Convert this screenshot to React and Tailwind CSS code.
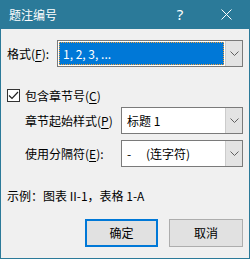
function Chevron() {
  return (
    <svg width="9" height="6" viewBox="0 0 9 6" className="block">
      <path d="M0.5 0.5 L4.5 4.5 L8.5 0.5" fill="none" stroke="#606060" strokeWidth="1" />
    </svg>
  )
}

function Combo({ children, selected }) {
  return (
    <div className="flex h-[27px] flex-1 border border-[#7a7a7a] bg-white">
      <div className="flex min-w-0 flex-1 p-[1px]">
        {selected ? (
          <div className="flex flex-1 items-center border border-dotted border-[#f4a13a] bg-[#0078d7] pl-[3px] text-white">
            {children}
          </div>
        ) : (
          <div className="flex flex-1 items-center pl-[4px] text-black">{children}</div>
        )}
      </div>
      <div className="flex w-[17px] items-center justify-center border-l border-[#cccccc] bg-[#e3e3e3]">
        <Chevron />
      </div>
    </div>
  )
}

function U({ children }) {
  return <span className="underline underline-offset-2">{children}</span>
}

export default function App() {
  return (
    <div
      className="flex h-[259px] w-[250px] flex-col bg-[#2b7a99] px-[1px] pb-[1px] text-[12px] leading-none text-black"
      style={{ fontFamily: '"Noto Sans CJK SC", "Noto Sans", sans-serif' }}
    >
      {/* title bar */}
      <div className="flex h-[29px] items-center text-white">
        <div className="flex-1 pl-[8px] text-[12px]">题注编号</div>
        <div className="flex w-[46px] justify-center text-[15px]" style={{ fontFamily: '"Noto Sans", sans-serif' }}>?</div>
        <div className="flex w-[46px] justify-center">
          <svg width="11" height="11" viewBox="0 0 11 11">
            <path d="M0.5 0.5 L10.5 10.5 M10.5 0.5 L0.5 10.5" stroke="#ffffff" strokeWidth="1" />
          </svg>
        </div>
      </div>

      {/* body */}
      <div className="flex flex-1 flex-col bg-[#f0f0f0] px-[6px]">
        <div className="mt-[11px] flex items-center">
          <span className="w-[50px]">
            格式(<U>F</U>):
          </span>
          <Combo selected>1, 2, 3, ...</Combo>
        </div>

        <div className="mt-[22px] flex items-center gap-[5px]">
          <div className="flex h-[13px] w-[13px] items-center justify-center border border-[#333333] bg-white">
            <svg width="11" height="9" viewBox="0 0 11 9">
              <path d="M1 4.5 L4 7.5 L10 1" fill="none" stroke="#222222" strokeWidth="1.2" />
            </svg>
          </div>
          <span>
            包含章节号(<U>C</U>)
          </span>
        </div>

        <div className="mt-[5px] flex items-center pl-[18px]">
          <span className="w-[96px]">
            章节起始样式(<U>P</U>)
          </span>
          <Combo>标题 1</Combo>
        </div>

        <div className="mt-[6px] flex items-center pl-[18px]">
          <span className="w-[96px]">
            使用分隔符(<U>E</U>):
          </span>
          <Combo>
            <span className="w-[19px]">-</span>
            <span>(连字符)</span>
          </Combo>
        </div>

        <div className="mt-[23px] flex items-center">示例：图表 II-1，表格 1-A</div>

        <div className="mt-[17px] flex justify-end gap-[11px]">
          <button className="flex h-[28px] w-[73px] items-center justify-center border-2 border-[#0078d7] bg-[#e1e1e1]">
            确定
          </button>
          <button className="flex h-[28px] w-[74px] items-center justify-center border border-[#adadad] bg-[#e1e1e1]">
            取消
          </button>
        </div>
      </div>
    </div>
  )
}
